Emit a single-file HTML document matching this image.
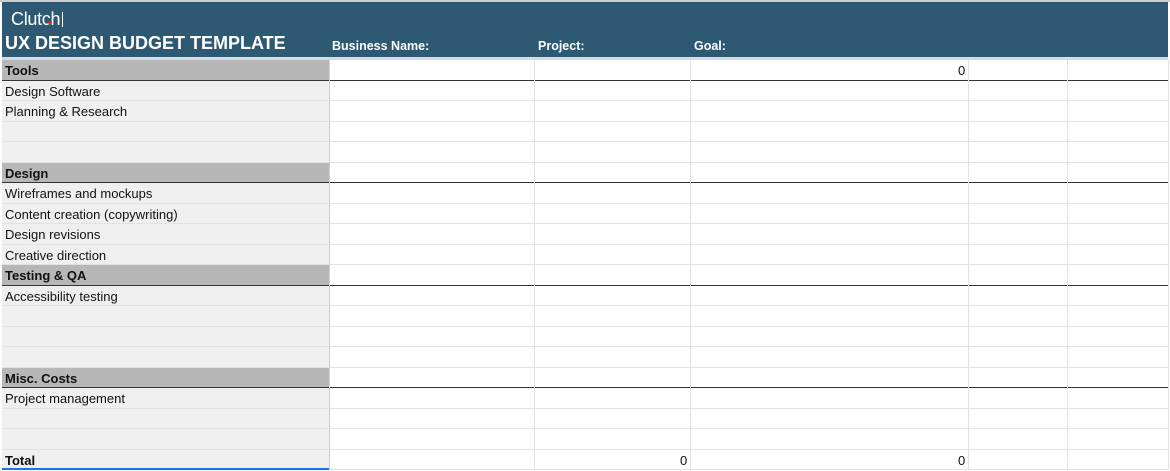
<!DOCTYPE html>
<html><head><style>
body{margin:0;width:1170px;height:471px;overflow:hidden;background:#fff;font-family:"Liberation Sans",Arial,sans-serif;position:relative}
.hdr{position:absolute;left:2px;top:2px;width:1166px;height:55px;background:#2d5972}
.hl{position:absolute;left:2px;top:57px;width:1166px;height:3px;background:#d3dce4}
.t{position:absolute;color:#fff;font-weight:bold;white-space:nowrap}
.row{position:absolute;left:2px;width:1166px;height:20.5px;box-sizing:border-box;border-bottom:1px solid #e2e2e2}
.row .a{position:absolute;left:0;top:0;width:327px;height:100%;background:#efefef;font-size:13px;line-height:21px;padding-left:3px;box-sizing:border-box;color:#111}
.sec{border-bottom:1px solid #333}
.sec .a{background:#b7b7b7;font-weight:bold}
.v{position:absolute;top:0;width:1px;height:410px;background:#e2e2e2}
.n{position:absolute;font-size:13px;line-height:21px;color:#111}
</style></head><body>
<div style="position:absolute;left:0;top:0;width:1170px;height:2px;background:#ccc"></div>
<div class="hdr"></div><div class="hl"></div>
<div class="t" style="left:11px;top:9px;font-size:18px;font-weight:normal;letter-spacing:-0.3px">Clutch</div>
<div style="position:absolute;left:48px;top:21px;width:3px;height:3px;border-radius:50%;background:#e62415"></div>
<div style="position:absolute;left:62px;top:12px;width:1px;height:15px;background:#fff"></div>
<div class="t" style="left:5px;top:33px;font-size:18px">UX DESIGN BUDGET TEMPLATE</div>
<div class="t" style="left:332px;top:39px;font-size:12.5px">Business Name:</div>
<div class="t" style="left:538px;top:39px;font-size:12.5px">Project:</div>
<div class="t" style="left:694px;top:39px;font-size:12.5px">Goal:</div>
<div style="position:absolute;left:0;top:60px;width:1170px;height:411px">
<div class="row sec" style="top:0"><div class="a">Tools</div></div>
<div class="row" style="top:20.5px"><div class="a">Design Software</div></div>
<div class="row" style="top:41px"><div class="a">Planning &amp; Research</div></div>
<div class="row" style="top:61.5px"><div class="a"></div></div>
<div class="row" style="top:82px"><div class="a"></div></div>
<div class="row sec" style="top:102.5px"><div class="a">Design</div></div>
<div class="row" style="top:123px"><div class="a">Wireframes and mockups</div></div>
<div class="row" style="top:143.5px"><div class="a">Content creation (copywriting)</div></div>
<div class="row" style="top:164px"><div class="a">Design revisions</div></div>
<div class="row" style="top:184.5px"><div class="a">Creative direction</div></div>
<div class="row sec" style="top:205px"><div class="a">Testing &amp; QA</div></div>
<div class="row" style="top:225.5px"><div class="a">Accessibility testing</div></div>
<div class="row" style="top:246px"><div class="a"></div></div>
<div class="row" style="top:266.5px"><div class="a"></div></div>
<div class="row" style="top:287px"><div class="a"></div></div>
<div class="row sec" style="top:307.5px"><div class="a">Misc. Costs</div></div>
<div class="row" style="top:328px"><div class="a">Project management</div></div>
<div class="row" style="top:348.5px"><div class="a"></div></div>
<div class="row" style="top:369px"><div class="a"></div></div>
<div class="row" style="top:389.5px"><div class="a" style="font-weight:bold">Total</div></div>
<div class="v" style="left:329px;background:#d0d0d0"></div>
<div class="v" style="left:534px"></div>
<div class="v" style="left:690px"></div>
<div class="v" style="left:968px"></div>
<div class="v" style="left:1067px"></div>
<div class="v" style="left:1168px"></div>
<div class="n" style="left:958px;top:0">0</div>
<div class="n" style="left:680px;top:389.5px">0</div>
<div class="n" style="left:958px;top:389.5px">0</div>
<div style="position:absolute;left:2px;top:408px;width:327px;height:2px;background:#1a73e8"></div>
</div>
</body></html>
